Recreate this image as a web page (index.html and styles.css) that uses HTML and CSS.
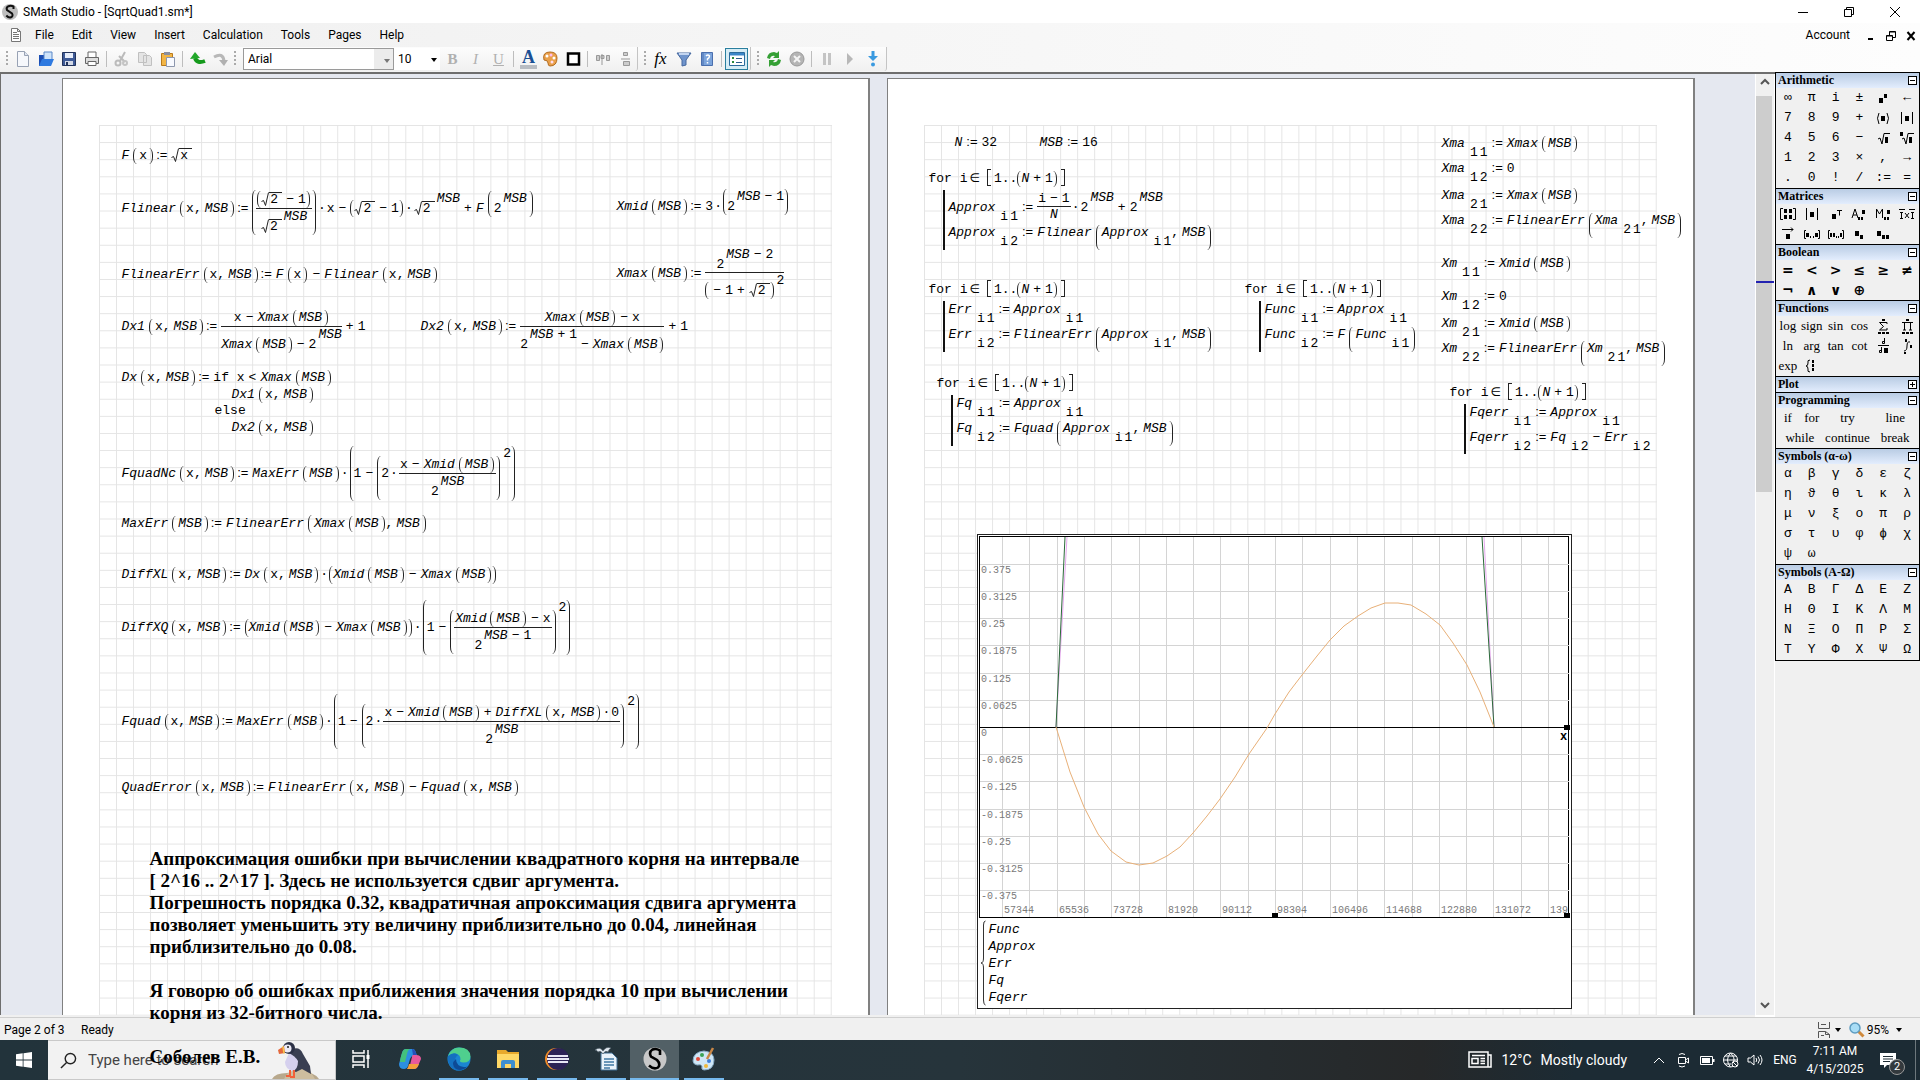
FILE: index.html
```html
<!DOCTYPE html>
<html lang="en">
<head>
<meta charset="utf-8">
<title>SMath Studio - [SqrtQuad1.sm*]</title>
<link rel="stylesheet" href="styles.css">
</head>
<body>
<div class="app">
  <header class="titlebar">
    <svg class="app-logo" viewBox="0 0 16 16"><circle cx="8" cy="8" r="8" fill="#bdbdbd"/><path d="M11.5 5V2.500Q9 1.200 6.500 2.200Q3.800 3.500 5 6L10 9.500Q11.500 12 9 13.300Q6.500 14 4.300 11.500" fill="none" stroke="#111" stroke-width="2"/></svg>
    <h1 class="title">SMath Studio - [SqrtQuad1.sm*]</h1>
    <div class="window-buttons">
      <button aria-label="Minimize"><svg viewBox="0 0 12 12"><path d="M1 6.500h10"/></svg></button>
      <button aria-label="Restore"><svg viewBox="0 0 12 12"><path d="M1.500 3.500h7v7h-7zM3.500 3.500v-2h7v7h-2"/></svg></button>
      <button aria-label="Close"><svg viewBox="0 0 12 12"><path d="M1 1l10 10M11 1L1 11"/></svg></button>
    </div>
  </header>

  <nav class="menubar">
    <svg class="doc-icon" viewBox="0 0 16 16"><path d="M3.500 1.500h6l3 3v10h-9zM9.500 1.500v3h3" fill="#fff" stroke="#777"/><path d="M5 5.500h4M5 7.500h6M5 9.500h6M5 11.500h6" stroke="#777"/></svg>
    <button>File</button><button>Edit</button><button>View</button><button>Insert</button><button>Calculation</button><button>Tools</button><button>Pages</button><button>Help</button>
    <span class="spacer"></span>
    <button>Account</button>
    <div class="mdi-buttons">
      <button aria-label="Minimize document"><svg viewBox="0 0 10 10"><path d="M2 8h5" stroke-width="2"/></svg></button>
      <button aria-label="Restore document"><svg viewBox="0 0 10 10"><path d="M.5 4.500h6v5h-6zM.5 5h6M3.500 4V.5h6v6H7M3.500 1h6"/></svg></button>
      <button aria-label="Close document"><svg viewBox="0 0 10 10"><path d="M1.500 1l7 8M8.500 1l-7 8" stroke-width="2"/></svg></button>
    </div>
  </nav>

  <div class="toolbar">
    <div class="strip strip-main">
      <span class="grip"></span>
      <button aria-label="New"><svg viewBox="0 0 16 16"><path d="M2.500 .5h7l4 4v11h-11z" fill="#f6f8fc" stroke="#98a2b4"/><path d="M9.500 .5v4h4" fill="#dde4f0" stroke="#98a2b4"/></svg></button>
      <button aria-label="Open"><svg viewBox="0 0 16 16"><path d="M1 4h5l1 2h5v9H1z" fill="#1c4fb4"/><path d="M6 1h8v9H6z" fill="#cfe4fa" stroke="#5a88c8"/><path d="M1 15l3-7h12l-3 7z" fill="#2f7ae0"/></svg></button>
      <button aria-label="Save"><svg viewBox="0 0 16 16"><path d="M1.500 1.500h13v13h-13z" fill="#3e5a96" stroke="#22335c"/><path d="M4 2h8v5H4z" fill="#e8eefa"/><path d="M4 10h8v4H4z" fill="#d3d9e6"/><path d="M5 11h2v3H5z" fill="#22335c"/></svg></button>
      <button aria-label="Print"><svg viewBox="0 0 16 16"><path d="M4 6V1h8v5" fill="#fff" stroke="#666"/><path d="M1.500 6.500h13v6h-13z" fill="#ddd" stroke="#666"/><path d="M4 10.500h8v4H4z" fill="#fff" stroke="#666"/></svg></button>
      <span class="sep"></span>
      <button aria-label="Cut" disabled><svg viewBox="0 0 16 16"><path d="M11 1L6 10M5 5l6 6" fill="none" stroke="#bbb" stroke-width="2"/><circle cx="4" cy="12" r="2.500" fill="none" stroke="#bbb" stroke-width="2"/><circle cx="11" cy="12" r="2" fill="none" stroke="#c4c4c4" stroke-width="2"/></svg></button>
      <button aria-label="Copy" disabled><svg viewBox="0 0 16 16"><path d="M1.500 1.500h6l2 2v8h-8zM6.500 4.500h6l2 2v8h-8z" fill="#e4e4e4" stroke="#c0c0c0"/></svg></button>
      <button aria-label="Paste"><svg viewBox="0 0 16 16"><path d="M1.500 2.500h11v12h-11z" fill="#f2b545" stroke="#b87a1c"/><path d="M4 1h6v3H4z" fill="#8a8fa0"/><path d="M6.500 6.500h8v9h-8z" fill="#f8faff" stroke="#8d97ad"/></svg></button>
      <span class="sep"></span>
      <button aria-label="Undo"><svg viewBox="0 0 16 16"><path d="M5 7q2 6 10 3" fill="none" stroke="#159a1c" stroke-width="4"/><path d="M0 8l5-7 5 6z" fill="#22a82a"/></svg></button>
      <button aria-label="Redo" disabled><svg viewBox="0 0 16 16"><path d="M1 6q9-5 10 4" fill="none" stroke="#b8b8b8" stroke-width="3"/><path d="M6 9h9l-4 6z" fill="#b0b0b0"/></svg></button>
      <span class="grip"></span>
      <span class="combo combo-font"><select aria-label="Font"><option>Arial</option></select><span class="arrow light"></span></span>
      <span class="combo combo-size"><select aria-label="Font size"><option>10</option></select><span class="arrow"></span></span>
      <button class="fmt fmt-b" disabled>B</button>
      <button class="fmt fmt-i" disabled>I</button>
      <button class="fmt fmt-u" disabled>U</button>
      <span class="sep"></span>
      <button class="text-color" aria-label="Text colour">A</button>
      <button aria-label="Background colour"><svg viewBox="0 0 16 16"><path d="M8 1q7 0 7 6 0 8-7 8-2 0-2-3T2 9Q0 1 8 1z" fill="#e9a04a" stroke="#b36c20"/><circle cx="5" cy="5" r="1.500" fill="#fff"/><circle cx="9" cy="4" r="1.500" fill="#fbe"/><circle cx="12" cy="7" r="1.500" fill="#fff"/><circle cx="10" cy="11" r="1.500" fill="#fde"/></svg></button>
      <button aria-label="Border"><svg viewBox="0 0 16 16"><path d="M3 2.500h11v11H3z" fill="#fff" stroke="#000" stroke-width="2.500"/></svg></button>
      <span class="sep"></span>
      <button aria-label="Align horizontally" disabled><svg viewBox="0 0 16 16"><path d="M1.500 4.500h3v5h-3zM7 3v11M11.500 4.500h3v5h-3zM6 4.500h3v3H6z" fill="#ccc" stroke="#999"/></svg></button>
      <button aria-label="Align vertically" disabled><svg viewBox="0 0 16 16"><path d="M5.500 1.500h4v3h-4zM3 8h9M5.500 10.500h6v4h-6z" fill="#ccc" stroke="#999"/></svg></button>
    </div>
    <div class="strip">
      <span class="grip"></span>
      <button class="fx" aria-label="Insert function">fx</button>
      <button aria-label="Units"><svg viewBox="0 0 16 16"><path d="M1 2h14L10 9v5l-4 1V9z" fill="#6f94cc" stroke="#46699f"/><path d="M3 3h10" stroke="#c3d5f0" stroke-width="2"/></svg></button>
      <button aria-label="Reference book"><svg viewBox="0 0 16 16"><path d="M2.500 1.500h11v13h-11z" fill="#7ba4dc" stroke="#4a6fae"/><path d="M4 1.500v13" stroke="#4a6fae"/><path d="M7 5q2-2 3.500 0 0 2-2 3v1.500M8.500 11v1.500" fill="none" stroke="#fff" stroke-width="1.500"/></svg></button>
      <span class="sep"></span>
      <button class="pressed" aria-label="Show panel" aria-pressed="true"><svg viewBox="0 0 16 16"><path d="M.5 1.500h15v13H.5z" fill="#fff" stroke="#2c6c9c"/><path d="M1 2h14v2.500H1z" fill="#3a86c8"/><path d="M3 7h2M3 11h2" stroke="#2a8a3c" stroke-width="2"/><path d="M7 7.500h6M7 11.500h6" stroke="#2c5c8c"/></svg></button>
    </div>
    <div class="strip">
      <span class="grip"></span>
      <button aria-label="Recalculate"><svg viewBox="0 0 16 16"><path d="M1 7Q2 1 8 1l3 1 2-2v7H7l2-2Q5 4 4 8zM15 9q-1 6-7 6l-3-1-2 2V9h6l-2 2q4 1 5-3z" fill="#35a035"/></svg></button>
      <button aria-label="Stop" disabled><svg viewBox="0 0 16 16"><circle cx="8" cy="8" r="7" fill="#b5b5b5" stroke="#999"/><path d="M5 5l6 6M11 5l-6 6" stroke="#f4f4f4" stroke-width="2"/></svg></button>
      <span class="sep"></span>
      <button aria-label="Pause" disabled><svg viewBox="0 0 16 16"><path d="M4 2h3v12H4zM9 2h3v12H9z" fill="#c4c4c4"/></svg></button>
      <button aria-label="Run" disabled><svg viewBox="0 0 16 16"><path d="M5 2l6 6-6 6z" fill="#b8b8b8"/></svg></button>
      <button aria-label="Step"><svg viewBox="0 0 16 16"><path d="M6.500 0h3v5H13l-5 5-5-5h3.500z" fill="#3a9ae0"/><circle cx="8" cy="13.500" r="2" fill="#3a9ae0"/></svg></button>
    </div>
  </div>

  <main class="main">
    <div class="desk">
      <section class="sheet" id="sheet-1" aria-label="Page 1">
        <div class="grid"></div>
        <div class="note">
          <p>Аппроксимация ошибки при вычислении квадратного корня на интервале<br>[ 2^16 .. 2^17 ]. Здесь не используется сдвиг аргумента.<br>Погрешность порядка 0.32, квадратичная апроксимация сдвига аргумента<br>позволяет уменьшить эту величину приблизительно до 0.04, линейная<br>приблизительно до 0.08.</p>
          <p>Я говорю об ошибках приближения значения порядка 10 при вычислении<br>корня из 32-битного числа.</p>
          <p>Соболев Е.В.</p>
        </div>
      </section>
      <section class="sheet" id="sheet-2" aria-label="Page 2">
        <div class="grid"></div>
        <figure class="plot">
          <svg id="plot" viewBox="0 0 592 383" aria-label="Error plot"></svg>
          <figcaption class="series">
            <svg class="brace" viewBox="0 0 6 86"><path d="M5.500 1Q3.500 1 3.500 5V38Q3.500 43 1 43Q3.500 43 3.500 48V80Q3.500 85 5.500 85" fill="none" stroke="#333"/></svg>
            <ul><li>Func</li><li>Approx</li><li>Err</li><li>Fq</li><li>Fqerr</li></ul>
          </figcaption>
        </figure>
      </section>
    </div>
    <div class="scrollbar">
      <button aria-label="Scroll up"><svg viewBox="0 0 10 10"><path d="M1 7l4-4 4 4"/></svg></button>
      <div class="track"><div class="thumb"></div><div class="mark"></div></div>
      <button aria-label="Scroll down"><svg viewBox="0 0 10 10"><path d="M1 3l4 4 4-4"/></svg></button>
    </div>
    <aside class="palettes" id="palettes"></aside>
  </main>

  <footer class="statusbar">
    <span class="page-no">Page 2 of 3</span><span>Ready</span>
    <span class="spacer"></span>
    <button aria-label="Page layout"><svg class="layout-icon" viewBox="0 0 14 16"><path d="M1.500 0v6.500h11V0M4 2.500h5M1.500 16V9.500h7l4 3V16M8.500 9.500v3h4M4 13.500h3" fill="none" stroke="#555"/></svg><span class="arrow"></span></button>
    <button class="zoom"><svg viewBox="0 0 16 16"><path d="M9.500 9.500l5 5" stroke="#d08a3c" stroke-width="3"/><circle cx="6" cy="6" r="5" fill="#a8ddf6" stroke="#5e9cc0" stroke-width="1.500"/></svg>95%<span class="arrow"></span></button>
  </footer>

  <div class="taskbar">
    <button class="start" aria-label="Start"><svg viewBox="0 0 16 16"><path d="M0 2.300L6.700 1.300V7.600H0zM7.500 1.200L16 0v7.600H7.500zM0 8.400h6.700v6.400L0 13.800zM7.500 8.400H16V16l-8.500-1.200z" fill="#fff"/></svg></button>
    <div class="search">
      <svg class="glass" viewBox="0 0 18 18"><circle cx="11" cy="7" r="5.500"/><path d="M7 11l-6 6"/></svg>
      <input type="text" placeholder="Type here to search" aria-label="Type here to search">
      <svg class="puffin" viewBox="0 0 50 38"><path d="M0 38q3-6 15-6l12-2q14 0 20 8z" fill="#b8a88c"/><path d="M15 33l8-5 14 0 6 10H12z" fill="#cdbd9f"/><path d="M20 8q8-3 11 5l7 12 1 8-9-5-6 3q-8-2-8-10 1-8 4-13z" fill="#3a3f52"/><path d="M17 12q6 3 9 8 0 8-5 10-8-2-8-9z" fill="#d5d0ee"/><circle cx="17" cy="7" r="6" fill="#2c3146"/><circle cx="15.500" cy="7.500" r="4" fill="#eceaf6"/><circle cx="16" cy="6" r="1" fill="#222"/><path d="M12 5l-6 4 1 4 6-1z" fill="#e4683c"/><path d="M11 5.500l1 7" stroke="#f4c94c" stroke-width="1.500"/><path d="M18 29v6h-4M22 29v7h-4" fill="none" stroke="#f2603a" stroke-width="2"/></svg>
    </div>
    <div class="tasks">
      <button aria-label="Task view"><svg viewBox="0 0 24 24" fill="none" stroke="#fff" stroke-width="1.500"><path d="M4 3v3h11V3M4 9h11v6H4zM4 21v-3h11v3M19 3v18"/><path d="M17.500 8h3v4h-3z" fill="#fff" stroke="none"/></svg></button>
      <button aria-label="Copilot"><svg viewBox="0 0 24 24"><path d="M8 2h7q2 0 3 4l1 3h-4q-2 0-3 3l-2 7q-1 3-4 3-5 0-5-5l3-11Q5 2 8 2z" fill="#2c8fe0"/><path d="M8 2h5q-3 0-4 5l-2 8H2q0-3 2-9 1-4 4-4z" fill="#43c07c"/><path d="M15 8h3q5 0 5 4l-3 7q-1 3-4 3H9q2-1 3-4l2-8q0-2 1-2z" fill="#e8599c"/><path d="M11 17h10q-2 5-5 5H9q1-1 2-5z" fill="#f4a03c"/><path d="M14 2q3 0 4 4l1 2h-4z" fill="#284fb8"/></svg></button>
      <button class="open" aria-label="Edge"><svg viewBox="0 0 24 24"><circle cx="12" cy="12" r="11.500" fill="#1b86d2"/><path d="M1 9Q4 .5 12 .5q11 0 11.500 9 0 6-7 6-5 0-3-3 0-5-5-6-5 0-7.500 3z" fill="#4fcf8e"/><path d="M1 9q6-5 10-1-4 3-3 8 2 6 9 6-6 3-11 0Q0 17 1 9z" fill="#1470c0"/><path d="M9 12q0 7 8 8 4 0 5-2-6 7-13 4-6-5 0-10z" fill="#0d4a96"/></svg></button>
      <button class="open stack" aria-label="File Explorer"><svg viewBox="0 0 24 24"><path d="M1 3h9l2 2h11v16H1z" fill="#e8a92c"/><path d="M1 7h22v14H1z" fill="#ffd866"/><path d="M5 21v-6q0-2 2-2h10q2 0 2 2v6h-4v-4H9v4z" fill="#3e8fd0"/></svg></button>
      <button class="open" aria-label="Eclipse"><svg viewBox="0 0 24 24"><circle cx="11" cy="12" r="11" fill="#f08c28"/><circle cx="13" cy="12" r="11" fill="#2c2255"/><path d="M3 9h20M2 12h22M3 15h20" stroke="#e8e6f4" stroke-width="1.800"/></svg></button>
      <button class="open" aria-label="Writer"><svg viewBox="0 0 24 24"><path d="M7 6h11l5 5v12H7z" fill="#e9f2fa" stroke="#3f6d92"/><path d="M10 12h10M10 15h10M10 18h10M10 21h6" stroke="#3f78a4" stroke-width="1.500"/><path d="M1 3q5-4 8 1 3-5 8-3-2 1-3 4-3-2-5 2-2-4-5-2Q3 3 1 3z" fill="#dfe7ee" stroke="#51606c" stroke-width=".7"/></svg></button>
      <button class="open active" aria-label="SMath Studio"><svg viewBox="0 0 24 24"><circle cx="12" cy="12" r="11.500" fill="#c8c8c8"/><path d="M17 8V3.500Q13 1 9.500 2.500 5.500 5 8 9.500l6 3.500q4 4 1 7.500-4 2.500-9-2" fill="none" stroke="#000" stroke-width="2.600"/></svg></button>
      <button class="open" aria-label="Paint"><svg viewBox="0 0 24 24"><path d="M12 4q10 1 10 9 0 10-10 10-3 0-2-4-1-2-5-1-4-1-4-4Q1 5 12 4z" fill="#cfe6f5" stroke="#86aac4"/><circle cx="6" cy="12" r="2" fill="#e04a3a"/><circle cx="10" cy="8" r="2" fill="#3aa455"/><circle cx="17" cy="14" r="2" fill="#3f7fd6"/><circle cx="14" cy="19" r="2" fill="#f0b93a"/><path d="M21 1l-6 11" stroke="#c98746" stroke-width="2.500"/></svg></button>
    </div>
    <span class="spacer"></span>
    <button class="weather"><svg viewBox="0 0 24 18" fill="none" stroke="#fff" stroke-width="1.500"><path d="M1 1h19v15H1zM20 4h3v12h-4"/><path d="M4 7.500h6v5H4zM4 4.500h13M12.500 7.500H17M12.500 10H17M12.500 12.500H17"/></svg><span>12°C</span><span>Mostly cloudy</span></button>
    <div class="tray">
      <button aria-label="Show hidden icons"><svg viewBox="0 0 16 16"><path d="M3 11l5-5 5 5"/></svg></button>
      <button aria-label="Meet now"><svg viewBox="0 0 16 16"><path d="M3.500 5.500h7v6h-7zM10.500 8l3-2v5l-3-2M4 2.500q3-2 6 0M4 14q3 2 6 0"/></svg></button>
      <button aria-label="Battery"><svg viewBox="0 0 16 16"><path d="M1.500 4.500h12v8h-12z"/><path d="M3 6h8v5H3zM14 7h1.500v3H14z" fill="#fff" stroke="none"/></svg></button>
      <button aria-label="Network"><svg viewBox="0 0 16 16"><circle cx="7.500" cy="8" r="7"/><path d="M.5 8h14M2 4h11M2 12h6M7.500 1q-6 7 0 14M7.500 1q5 5 3 9"/><circle cx="12" cy="12" r="3" fill="#1f2d35"/><path d="M10 10l4 4"/></svg></button>
      <button aria-label="Volume"><svg viewBox="0 0 16 16"><path d="M1 6h2.500L7 3v10L3.500 10H1zM9 6q1.500 2 0 4M11 4.500q3 3.500 0 7M13 3q4 5 0 10"/></svg></button>
      <button class="lang">ENG</button>
      <button class="clock"><span>7:11 AM</span><span>4/15/2025</span></button>
      <button class="notify" aria-label="Notifications"><svg viewBox="0 0 16 16"><path d="M0 1h16v12H7l-3 3v-3H0z" fill="#fff" stroke="none"/><path d="M3 4.500h10M3 7h10M3 9.500h7" stroke="#1f2d35"/></svg><span class="badge">2</span></button>
    </div>
  </div>
</div>
<script src="app.js"></script>
</body>
</html>
```
FILE: styles.css
```css
* { box-sizing: border-box; }
body { margin: 0; font: 12px/16px Roboto, "Open Sans", sans-serif; color: #000; overflow: hidden; }
button { margin: 0; padding: 0; border: 0; background: none; font: inherit; color: inherit; }
h1, p, ul, figure { margin: 0; padding: 0; }
.spacer { flex: 1; }

.app { display: grid; grid-template-rows: 23px 24px 25px 1fr 22px 40px; height: 100vh; background: #f0f0f0; }

/* title and menu */
.titlebar { display: flex; align-items: center; background: #fff; padding-left: 2px; }
.app-logo { width: 16px; height: 16px; margin-right: 5px; }
.title { flex: 1; font-size: 12px; font-weight: 400; }
.window-buttons { display: flex; padding-right: 2px; }
.window-buttons button { width: 46px; height: 20px; }
.window-buttons svg { width: 12px; height: 12px; fill: none; stroke: #000; vertical-align: middle; }
.menubar, .toolbar { background: linear-gradient(90deg, #f0f0f0, #fdfdfd); }
.menubar { display: flex; align-items: center; padding: 0 4px 0 8px; }
.doc-icon { width: 16px; height: 16px; margin-right: 2px; }
.menubar > button { padding: 0 9px; }
.mdi-buttons { display: flex; gap: 10px; margin-left: 7px; }
.mdi-buttons svg { width: 10px; height: 10px; fill: none; stroke: #000; vertical-align: middle; }

/* toolbar */
.toolbar { display: flex; }
.strip { display: flex; align-items: center; height: 24px; padding: 0 2px 0 4px; border-right: 1px solid #c4c4c4; border-radius: 0 0 3px 0; background: linear-gradient(#fcfcfc, #f0f0f0); }
.strip-main { padding-right: 0; }
.strip > button { width: 23px; height: 22px; display: flex; align-items: center; justify-content: center; }
.strip svg { width: 16px; height: 16px; }
.grip { width: 2px; height: 16px; margin: 0 3px 0 2px; background: repeating-linear-gradient(#aaa 0 2px, transparent 2px 4px); }
.sep { width: 1px; height: 16px; margin: 0 3px; background: #bdbdbd; }
.combo { position: relative; height: 22px; background: #fff; }
.combo select { appearance: none; width: 100%; height: 100%; border: 0; padding: 0 4px; background: none; font: inherit; color: #000; }
.combo-font { width: 151px; margin-left: 4px; border: 1px solid #9a9a9a; }
.combo-font select { background: linear-gradient(90deg, #fff 130px, #ececec 130px); }
.combo-size { width: 46px; margin-right: 1px; }
.arrow { display: inline-block; border: 3px solid transparent; border-top: 4px solid #000; border-bottom: 0; vertical-align: middle; }
.arrow.light { border-top-color: #777; }
.combo .arrow { position: absolute; right: 3px; top: 10px; }
.fmt { font-family: "Liberation Serif", serif; font-size: 15px; color: #b0b0b0; }
.fmt-b { font-weight: 700; }
.fmt-i { font-style: italic; }
.fmt-u { text-decoration: underline; }
.strip > .text-color { width: 17px; height: 20px; margin: 0 1px 0 3px; border-bottom: 4px solid #b8bcc2; font: 700 18px/16px "Liberation Serif", serif; color: #1a4f94; }
.fx { font: italic 17px/20px "Liberation Serif", serif; }
.strip > .pressed { border: 1px solid #2a7f9e; background: #d6ecf5; }

/* workspace */
.main { display: flex; min-height: 0; border-top: 2px solid #6e6e6e; border-bottom: 1px solid #cfcfcf; background: #f0f0f0; }
.desk { flex: 1; display: flex; justify-content: center; gap: 17px; padding-top: 4px; margin-bottom: 2px; border-left: 1px solid #6e6e6e; background: #e5e8f0; min-width: 0; }
.sheet { position: relative; width: 808px; padding: 46px 36px 0; border: 1px solid #808080; border-width: 1px 2px 0 1px; background: #fff; }
.grid { height: 100%; border-left: 1px solid #e4e4e4; background-image: linear-gradient(90deg, transparent calc(100% - 1px), #e4e4e4 0), linear-gradient(#e4e4e4 1px, transparent 0); background-size: calc(100% / 43) calc(100% / 52); }

/* worksheet regions: free placement on the canvas */
.region { position: absolute; white-space: nowrap; font: 13px/14px "Liberation Mono", monospace; }
.region i { font-style: italic; }
.row { display: block; }
.call, .paren { display: inline-block; border: solid #222; border-width: 0 1px; border-radius: 4px / 7px; }
.call { margin: 0 1px 0 4px; padding: 1px 5px; }
.paren { margin-right: 1px; padding: 1px 3px; }
.brk { display: inline-block; width: 4px; height: 17px; margin-right: 3px; border: 1px solid #222; border-right: 0; vertical-align: -4px; }
.brk.close { margin: 0 0 0 3px; border: 1px solid #222; border-left: 0; }
.op { margin: 0 4px; }
.dot { display: inline-block; width: 10px; text-align: center; }
.def { margin: 0 4px; font-family: "Liberation Sans", sans-serif; }
.call + .def { margin-left: 2px; }
.comma { margin-right: 3px; }
.elem { font-family: "DejaVu Sans", sans-serif; font-size: 12px; margin: 0 7px 0 2px; }
.sup { display: inline-block; vertical-align: 10px; margin-left: 2px; }
.sup.high { vertical-align: 20px; }
.sub { display: inline-block; vertical-align: -9px; margin-left: 5px; }
.gap { display: inline-block; width: 2px; }
.frac { display: inline-flex; flex-direction: column; align-items: center; vertical-align: 9px; }
.num { border-bottom: 1px solid #222; align-self: stretch; text-align: center; padding: 0 1px; }
.den { padding-top: 1px; }
.root svg { width: 8px; height: 14px; vertical-align: -3px; fill: none; stroke: #222; }
.root span { display: inline-block; padding: 0 4px 0 1px; border-top: 1px solid #222; }
.body { display: block; margin: 3px 0 0 14px; padding-left: 4px; border-left: 2px solid #111; }
.body .row { padding-top: 1px; }
.note { position: absolute; z-index: 5; left: 87px; top: 769px; white-space: nowrap; font: 700 19px/22px "Liberation Serif", serif; }
.note p + p { margin-top: 22px; }

/* plot */
.plot { position: absolute; left: 89px; top: 455px; width: 595px; height: 475px; border: 1px solid #222; background: #fff; }
.plot > svg { display: block; width: 592px; height: 383px; }
.plot text { font: 10px "Liberation Mono", monospace; fill: #7a7a7a; }
.plot .axis-name { font: 700 12px "Liberation Mono", monospace; fill: #000; }
.series { display: flex; align-items: center; gap: 3px; padding: 2px; font: italic 13px/17px "Liberation Mono", monospace; }
.brace { width: 6px; height: 86px; }
.series ul { list-style: none; }

/* scrollbar */
.scrollbar { width: 20px; display: flex; flex-direction: column; border: solid #fff; border-width: 0 1px 2px; background: #f0f0f0; }
.scrollbar button { height: 18px; }
.scrollbar svg { width: 10px; height: 10px; fill: none; stroke: #555; stroke-width: 2; }
.track { position: relative; flex: 1; margin-top: 4px; }
.thumb { width: 16px; height: 44%; background: #cdcdcd; }
.mark { position: absolute; left: 0; right: 0; top: 20.5%; height: 2px; background: #2222b0; }

/* symbol palettes */
.palettes { width: 145px; margin-top: -2px; }
.palette { border: 1px solid #000; border-bottom: 0; }
.palette:last-child { border-bottom: 1px solid #000; }
.palette header { display: flex; justify-content: space-between; align-items: center; height: 15px; padding: 0 2px; background: linear-gradient(#b9cce4, #e3edfd); font: 700 12px/15px "Liberation Serif", serif; }
.palette header button { position: relative; width: 9px; height: 9px; border: 1px solid #000; background: linear-gradient(#000, #000) center / 5px 1px no-repeat #fff; }
.palette header .folded { background: linear-gradient(#000, #000) center / 5px 1px no-repeat, linear-gradient(#000, #000) center / 1px 5px no-repeat #fff; }
.keys { display: grid; grid-template-columns: repeat(6, 1fr); grid-auto-rows: 20px; font: 13px/20px "Liberation Mono", "DejaVu Sans", monospace; }
.keys button { display: flex; justify-content: center; align-items: center; min-width: 0; }
.keys .wide { grid-column: span 2; }
.keys.words { font: 13px/20px "Liberation Serif", serif; }
.keys.bold { font: 700 14px/20px "DejaVu Sans", sans-serif; }
.keys svg { width: 18px; height: 16px; fill: none; stroke: #000; }
.keys svg .f { fill: #000; stroke: none; }

/* status bar */
.statusbar { display: flex; align-items: center; padding: 2px 18px 0 4px; background: #f0f0f0; }
.page-no { width: 77px; }
.statusbar button { display: flex; align-items: center; gap: 4px; margin-left: 8px; }
.statusbar svg { width: 16px; height: 16px; }
.statusbar .layout-icon { width: 14px; }
.statusbar .zoom { gap: 2px; }
.zoom .arrow { margin-left: 5px; }

/* taskbar */
.taskbar { display: flex; background: linear-gradient(90deg, #22333b, #26343b 50%, #262829 74%, #1c2b34 82%); color: #fff; }
.start { width: 48px; }
.start svg { width: 16px; height: 16px; vertical-align: middle; }
.search { position: relative; display: flex; align-items: center; width: 288px; padding-left: 12px; background: #f2f2f2; border: 1px solid #c9c9c9; border-left: 0; }
.glass { width: 17px; height: 17px; margin-right: 11px; fill: none; stroke: #222; stroke-width: 1.5px; }
.search input { flex: 1; min-width: 0; border: 0; padding: 0; background: none; font: 15px/20px Roboto, sans-serif; }
.search input::placeholder { color: #444; opacity: 1; }
.puffin { width: 50px; height: 38px; align-self: flex-end; margin-right: 13px; }
.tasks { display: flex; }
.tasks button { width: 49px; border-bottom: 2px solid transparent; background-clip: padding-box; }
.tasks svg { width: 24px; height: 24px; vertical-align: middle; }
.tasks .open { background: linear-gradient(#76b9ed, #76b9ed) bottom / 40px 2px no-repeat; background-clip: border-box; background-origin: border-box; }
.tasks .active { background: linear-gradient(transparent 38px, #76b9ed 38px), #526066; background-origin: border-box; background-clip: border-box; }
.weather { display: flex; align-items: center; gap: 9px; font-size: 14px; margin-right: 20px; }
.weather svg { width: 24px; height: 18px; }
.tray { display: flex; align-items: center; }
.tray button { min-width: 24px; height: 40px; }
.tray svg { width: 16px; height: 16px; fill: none; stroke: #fff; vertical-align: middle; }
.lang { margin-left: 6px; }
.tray .clock { display: flex; flex-direction: column; justify-content: center; align-items: center; line-height: 18px; width: 76px; }
.tray .notify { position: relative; width: 43px; border-right: 1px solid #6d777c; margin-right: 4px; padding-right: 12px; }
.badge { position: absolute; left: 16px; top: 19px; width: 16px; height: 16px; border-radius: 8px; border: 1px solid #999; background: #33393d; font-size: 11px; line-height: 14px; }
```
FILE: app.js
```js
// Formula typesetting: turns a short linear notation into nested inline boxes.
const HOOK = '<svg viewBox="0 0 8 14"><path d="M.5 9.500l2-1 2 5L7.500 .5"/></svg>';

function typeset(src) {
  let pos = 0;
  const braces = () => { pos++; const s = run('}'); pos++; return s; };
  function run(end) {
    let out = '', named = false;
    while (pos < src.length && src[pos] !== end) {
      const rest = src.slice(pos);
      let m;
      if ((m = rest.match(/^'([^']*)'/))) { out += m[1].replace(/ /g, '&nbsp;'); pos += m[0].length; named = false; continue; }
      if ((m = rest.match(/^\\frac/))) { pos += 5; const n = braces(), d = braces(); out += `<span class="frac"><span class="num">${n}</span><span class="den">${d}</span></span>`; named = false; continue; }
      if ((m = rest.match(/^\\sqrt/))) { pos += 5; out += `<span class="root">${HOOK}<span>${braces()}</span></span>`; named = false; continue; }
      if ((m = rest.match(/^[A-Za-z][A-Za-z0-9]*/))) { out += /^[xi]$/.test(m[0]) ? m[0] : `<i>${m[0]}</i>`; pos += m[0].length; named = true; continue; }
      if (rest.startsWith('^^')) { pos += 2; out += `<span class="sup high">${braces()}</span>`; continue; }
      if (rest[0] === '^') { pos++; out += `<span class="sup">${braces()}</span>`; continue; }
      if (rest[0] === '_') { pos++; out += `<span class="sub">${braces()}</span>`; continue; }
      if (rest[0] === '(') { pos++; const cls = named ? 'call' : 'paren'; out += `<span class="${cls}">${run(')')}</span>`; pos++; named = false; continue; }
      if (rest.startsWith(':=')) { pos += 2; out += '<span class="def">:=</span>'; named = false; continue; }
      const c = rest[0];
      pos++;
      named = false;
      if (c === '-') out += '<span class="op">−</span>';
      else if (c === '+') out += '<span class="op">+</span>';
      else if (c === '<') out += '<span class="op">&lt;</span>';
      else if (c === '*') out += '<span class="dot">·</span>';
      else if (c === ',') out += '<span class="comma">,</span>';
      else if (c === ' ') out += '<span class="gap"></span>';
      else if (c === '∈') out += '<span class="elem">∈</span>';
      else if (c === '[') out += '<span class="brk"></span>';
      else if (c === ']') out += '<span class="brk close"></span>';
      else out += c;
    }
    return out;
  }
  return run('');
}

// x, baseline y, lines (the lines after the first form a loop body)
const LOOP = "'for 'i∈[1..(N+1)]";
const sheets = {
  'sheet-1': [
    [59, 80, 'F(x):=\\sqrt{x}'],
    [59, 133, 'Flinear(x,MSB):=(\\frac{(\\sqrt{2}-1)}{\\sqrt{2}^{MSB}})*x-(\\sqrt{2}-1)*\\sqrt{2}^{MSB}+F(2^{MSB})'],
    [554, 131, 'Xmid(MSB):=3*(2^{MSB-1})'],
    [59, 199, 'FlinearErr(x,MSB):=F(x)-Flinear(x,MSB)'],
    [554, 198, 'Xmax(MSB):=\\frac{2^{MSB-2}}{(-1+\\sqrt{2})^{2}}'],
    [59, 251, 'Dx1(x,MSB):=\\frac{x-Xmax(MSB)}{Xmax(MSB)-2^{MSB}}+1'],
    [358, 251, 'Dx2(x,MSB):=\\frac{Xmax(MSB)-x}{2^{MSB+1}-Xmax(MSB)}+1'],
    [59, 302, "Dx(x,MSB):='if 'x<Xmax(MSB)"],
    [169, 319, 'Dx1(x,MSB)'],
    [152, 335, "'else'"],
    [169, 352, 'Dx2(x,MSB)'],
    [59, 398, 'FquadNc(x,MSB):=MaxErr(MSB)*(1-(2*\\frac{x-Xmid(MSB)}{2^{MSB}})^^{2})'],
    [59, 448, 'MaxErr(MSB):=FlinearErr(Xmax(MSB),MSB)'],
    [59, 499, 'DiffXL(x,MSB):=Dx(x,MSB)*(Xmid(MSB)-Xmax(MSB))'],
    [59, 552, 'DiffXQ(x,MSB):=(Xmid(MSB)-Xmax(MSB))*(1-(\\frac{Xmid(MSB)-x}{2^{MSB-1}})^^{2})'],
    [59, 646, 'Fquad(x,MSB):=MaxErr(MSB)*(1-(2*\\frac{x-Xmid(MSB)+DiffXL(x,MSB)*0}{2^{MSB}})^^{2})'],
    [59, 712, 'QuadError(x,MSB):=FlinearErr(x,MSB)-Fquad(x,MSB)'],
  ],
  'sheet-2': [
    [67, 67, 'N:=32'],
    [152, 67, 'MSB:=16'],
    [41, 103, LOOP, 'Approx_{i 1}:=\\frac{i-1}{N}*2^{MSB}+2^{MSB}', 'Approx_{i 2}:=Flinear(Approx_{i 1},MSB)'],
    [41, 214, LOOP, 'Err_{i 1}:=Approx_{i 1}', 'Err_{i 2}:=FlinearErr(Approx_{i 1},MSB)'],
    [357, 214, LOOP, 'Func_{i 1}:=Approx_{i 1}', 'Func_{i 2}:=F(Func_{i 1})'],
    [49, 308, LOOP, 'Fq_{i 1}:=Approx_{i 1}', 'Fq_{i 2}:=Fquad(Approx_{i 1},MSB)'],
    [554, 68, 'Xma_{1 1}:=Xmax(MSB)'],
    [554, 93, 'Xma_{1 2}:=0'],
    [554, 120, 'Xma_{2 1}:=Xmax(MSB)'],
    [554, 145, 'Xma_{2 2}:=FlinearErr(Xma_{2 1},MSB)'],
    [554, 188, 'Xm_{1 1}:=Xmid(MSB)'],
    [554, 221, 'Xm_{1 2}:=0'],
    [554, 248, 'Xm_{2 1}:=Xmid(MSB)'],
    [554, 273, 'Xm_{2 2}:=FlinearErr(Xm_{2 1},MSB)'],
    [562, 317, LOOP, 'Fqerr_{i 1}:=Approx_{i 1}', 'Fqerr_{i 2}:=Fq_{i 2}-Err_{i 2}'],
  ],
};

for (const [id, regions] of Object.entries(sheets)) {
  const sheet = document.getElementById(id);
  for (const [x, y, head, ...body] of regions) {
    const el = document.createElement('div');
    el.className = 'region';
    el.innerHTML = `<span class="row">${typeset(head)}</span>` +
      (body.length ? `<span class="body">${body.map(b => `<span class="row">${typeset(b)}</span>`).join('')}</span>` : '');
    sheet.append(el);
    // place the first line's baseline on y
    const probe = document.createElement('span');
    probe.style.display = 'inline-block';
    el.firstChild.prepend(probe);
    const base = Math.round(probe.getBoundingClientRect().bottom - el.getBoundingClientRect().top);
    probe.remove();
    el.style.left = x + 'px';
    el.style.top = (y - base) + 'px';
  }
}

// Plot
const curve = [[78,192],[92,237],[106,272],[120,299],[133,316],[148,327],[161,330],[175,328],[189,321],[202,312],[215,298],[229,281],[242,264],[257,242],[271,219],[289,193],[297,179],[311,157],[324,140],[339,121],[352,105],[366,91],[380,81],[393,73],[407,68],[420,68],[433,70],[448,79],[462,90],[475,108],[489,130],[502,157],[516,192]];
const line = (x1, y1, x2, y2, c, w = 1) => `<line x1="${x1}" y1="${y1}" x2="${x2}" y2="${y2}" stroke="${c}" stroke-width="${w}"/>`;
let g = '<rect x="1.500" y="1.500" width="589" height="381" fill="#fff" stroke="#000"/>';
for (let k = 0; k < 21; k++) g += line(Math.round(24 + k * 27.3) + .5, 2, Math.round(24 + k * 27.3) + .5, 382, '#d4d4d4');
for (let k = -6; k <= 6; k++) {
  const y = Math.round(192 - k * 27.2);
  if (k) g += line(2, y + .5, 591, y + .5, '#d4d4d4');
  g += `<text x="3" y="${y + 9}">${k * 0.0625}</text>`;
}
for (let k = 0; k < 11; k++) {
  g += `<text x="${Math.round(26 + k * 54.6)}" y="378">${k === 10 ? '139' : 57344 + k * 8192}</text>`;
}
g += line(2, 192.5, 590, 192.5, '#000');
g += line(78, 192, 89, 2, '#e6a8ee') + line(78, 192, 87, 2, '#2a6a38') + line(516, 192, 506, 2, '#e6a8ee') + line(516, 192, 504, 2, '#2a6a38');
g += `<polyline points="${curve.join(' ')}" fill="none" stroke="#e8b078"/>`;
g += '<rect x="586" y="190" width="6" height="5"/><rect x="586" y="378" width="6" height="5"/><rect x="294" y="378" width="6" height="5"/>';
g += '<text class="axis-name" x="582" y="205">x</text>';
document.getElementById('plot').innerHTML = g;

// Symbol palettes
const sq = (x, y, w = 4, h = w + 1) => `<rect class="f" x="${x}" y="${y}" width="${w}" height="${h}"/>`;
const pic = s => `<svg viewBox="0 0 18 16">${s}</svg>`;
const P = {
  pow: pic(sq(5, 8) + sq(10, 4, 3)),
  par: pic(sq(7, 6) + '<path d="M5 3q-3 5 0 11M13 3q3 5 0 11"/>'),
  abs: pic(sq(7, 6) + '<path d="M3.500 2v12M14.500 2v12"/>'),
  root: pic(sq(11, 7, 3, 6) + '<path d="M4 9l2-1 2 6 2-10.500h6"/>'),
  nroot: pic(sq(11, 7, 3, 6) + sq(2, 2, 3, 4) + '<path d="M4 9l2-1 2 6 2-10.500h6"/>'),
  mat: pic('<path d="M4 2.500H1.500v11H4M14 2.500h2.500v11H14"/>' + sq(5, 3, 3, 4) + sq(10, 3, 3, 4) + sq(5, 9, 3, 4) + sq(10, 9, 3, 4)),
  tr: pic(sq(5, 8) + '<path d="M10 4.500h5M12.500 4.500v5"/>'),
  alg: pic('<path d="M2 12L5 3l3 9M3 9h4"/>' + sq(12, 4, 3) + sq(8, 11, 2) + sq(11, 11, 2)),
  min: pic('<path d="M2.500 12V3l3 5 3-5v9"/>' + sq(13, 4, 3) + sq(10, 11, 2) + sq(13, 11, 2)),
  cross: pic('<path d="M1 3.500h6M11 3.500h6M3.500 6v7M14.500 6v7M7 7l4 5M11 7l-4 5M2 6.500h3M13 6.500h3M2 12.500h3M13 12.500h3"/>'),
  vec: pic('<path d="M3 3.500h11M12 1.500l2 2-2 2"/>' + sq(7, 8)),
  rng: pic('<path d="M3 4.500H1.500v8H3M15 4.500h1.500v8H15"/>' + sq(3, 7, 3) + sq(12, 7, 3) + sq(7, 10, 1) + sq(10, 10, 1)),
  rng3: pic('<path d="M3 4.500H1.500v8H3M15 4.500h1.500v8H15"/>' + sq(3, 7, 2, 4) + sq(6, 7, 2, 4) + sq(13, 7, 2, 4) + sq(9, 10, 1) + sq(11, 10, 1)),
  el: pic(sq(5, 5) + sq(10, 9, 3, 4)),
  el2: pic(sq(3, 5) + sq(8, 9, 3, 4) + sq(12, 9, 3, 4)),
  sum: pic('<path d="M13 6V4.500H5.500l4 4-4 3.500H13V10"/>' + sq(8, 1, 3, 2) + sq(4, 14, 3, 2) + sq(8, 14, 3, 2) + sq(12, 14, 3, 2)),
  prod: pic('<path d="M4 4.500h11M6.500 5v7M12.500 5v7M5 12h3M11 12h3"/>' + sq(8, 1, 3, 2) + sq(4, 14, 3, 2) + sq(8, 14, 3, 2) + sq(12, 14, 3, 2)),
  der: pic('<path d="M4 7.500h11M10.500 0v5.500H8.500v-2h2M7.500 9v5.500H5.500v-2h2"/>' + sq(10, 10, 4)),
  int: pic('<path d="M12 4q-3-1-3 4t-3 5"/>' + sq(7, 1, 2) + sq(6, 14, 2) + sq(12, 7, 2)),
  sys: pic('<path d="M7 2q-3 0-2 3 0 3-2 3 2 0 2 3-1 3 2 3"/>' + sq(9, 2, 2) + sq(9, 6, 2) + sq(9, 10, 2)),
};
const groups = [
  ['Arithmetic', '', ['∞', 'π', 'i', '±', P.pow, '←', '7', '8', '9', '+', P.par, P.abs, '4', '5', '6', '−', P.root, P.nroot, '1', '2', '3', '×', ',', '→', '.', '0', '!', '/', ':=', '=']],
  ['Matrices', '', [P.mat, P.abs, P.tr, P.alg, P.min, P.cross, P.vec, P.rng, P.rng3, P.el, P.el2]],
  ['Boolean', 'bold', ['=', '&lt;', '>', '≤', '≥', '≠', '¬', '∧', '∨', '⊕']],
  ['Functions', 'words', ['log', 'sign', 'sin', 'cos', P.sum, P.prod, 'ln', 'arg', 'tan', 'cot', P.der, P.int, 'exp', P.sys]],
  ['Plot', '', null],
  ['Programming', 'words', ['if', 'for', '*try', '*line', '*while', '*continue', '*break']],
  ['Symbols (α-ω)', '', [...'αβγδεζηϑθικλμνξοπρστυφϕχψω']],
  ['Symbols (Α-Ω)', '', [...'ΑΒΓΔΕΖΗΘΙΚΛΜΝΞΟΠΡΣΤΥΦΧΨΩ']],
];
document.getElementById('palettes').innerHTML = groups.map(([name, cls, keys]) =>
  `<section class="palette"><header>${name}<button aria-label="Toggle ${name}"${keys ? '' : ' class="folded"'}></button></header>` +
  (keys ? `<div class="keys ${cls}">${keys.map(k => k[0] === '*' ? `<button class="wide">${k.slice(1)}</button>` : `<button>${k}</button>`).join('')}</div>` : '') +
  '</section>').join('');
```
